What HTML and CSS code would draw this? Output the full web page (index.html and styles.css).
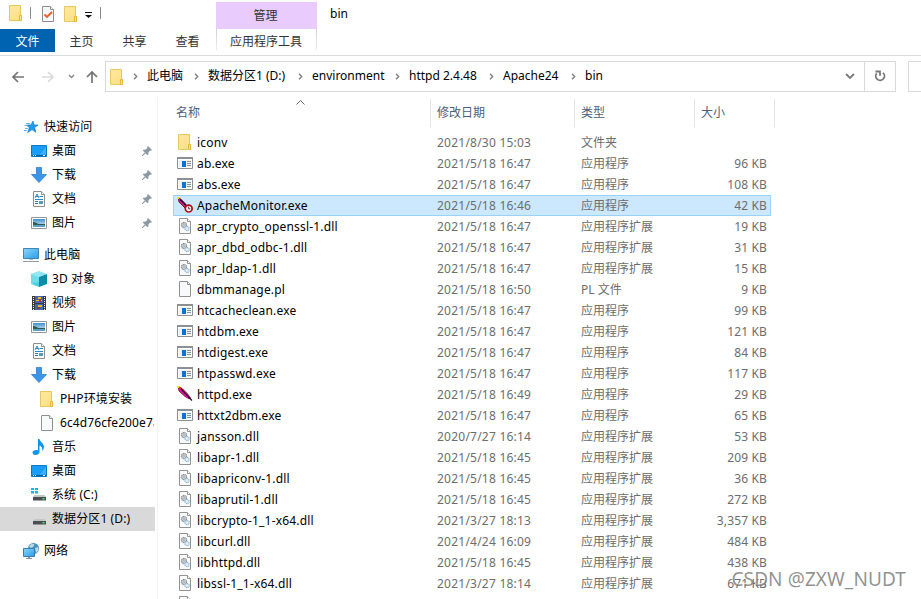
FILE: index.html
```html
<!DOCTYPE html>
<html lang="zh-CN">
<head>
    <meta charset="UTF-8">
    <meta name="viewport" content="width=device-width, initial-scale=1.0">
    <title>bin</title>
    <link rel="stylesheet" href="styles.css">
</head>
<body>
    <svg class="sprites" width="0" height="0">
        <defs>
            <linearGradient id="folder-fill" x1="0" y1="0" x2="1" y2="1">
                <stop offset="0" stop-color="#ffe9a2"/><stop offset="1" stop-color="#ffdf80"/>
            </linearGradient>
            <linearGradient id="screen-fill" x1="0" y1="0" x2="1" y2="1">
                <stop offset="0" stop-color="#8ad6fc"/><stop offset="1" stop-color="#2a9ce6"/>
            </linearGradient>
            <linearGradient id="photo-fill" x1="0" y1="0" x2="0" y2="1">
                <stop offset="0" stop-color="#3d8fd0"/><stop offset="1" stop-color="#eef6fb"/>
            </linearGradient>
        </defs>
        <symbol id="folder" viewBox="0 0 16 16">
            <path d="M1.5 .5h11v10h1v5h-12z" fill="url(#folder-fill)" stroke="#e8c660"/>
            <path d="M11.5 15.5v-5h2v5z" fill="#ffe692" stroke="#e3b83e"/>
        </symbol>
        <symbol id="exe" viewBox="0 0 16 16">
            <path d="M.5 2.5h15v11H.5z" fill="#fff" stroke="#8c9094"/>
            <path d="M0 2h16v2H0z" fill="#8c9094"/>
            <path d="M2 5h12v7H2z" fill="#eef0f2"/>
            <path d="M5 6h4v6H5z" fill="#0a72d8"/>
            <path d="M10 6.5h4M10 8.5h4M10 10.5h4" stroke="#8e9296"/>
        </symbol>
        <symbol id="file" viewBox="0 0 16 16">
            <path d="M2.5 .5h8l3 3v12h-11z" fill="#f8f9fa" stroke="#8f9193"/>
            <path d="M10.5 .5v3h3" fill="#fff" stroke="#8f9193"/>
        </symbol>
        <symbol id="dll" viewBox="0 0 16 16">
            <path d="M2.5 .5h8l3 3v12h-11z" fill="#fafafa" stroke="#939393"/>
            <path d="M10.5 .5v3h3" fill="#fff" stroke="#939393"/>
            <circle cx="7" cy="7" r="2.5" fill="#d9dde0" stroke="#858b91" stroke-width="1.3" stroke-dasharray="1.2 .5"/>
            <circle cx="7" cy="7" r=".9" fill="#fff" stroke="#858b91" stroke-width=".6"/>
            <circle cx="10" cy="10.5" r="2.1" fill="#e1eef7" stroke="#8fb8d4" stroke-width="1.2" stroke-dasharray="1 .5"/>
        </symbol>
        <symbol id="feather" viewBox="0 0 16 16">
            <path d="M1 .5l4 1.8 5.500 5.500L13.500 12l-1 1-4.500-2.500L2 5z" fill="#e01b30" stroke="#8a0d2a" stroke-width=".8"/>
            <path d="M2 2.500l9 9" stroke="#e012c8" stroke-width="1.800"/>
            <path d="M4 3l11 11.500" stroke="#210432" stroke-width="1.100"/>
            <path d="M0 0h2v2H0z" fill="#ffe600"/>
        </symbol>
        <symbol id="monitor" viewBox="0 0 16 16">
            <path d="M1 .5l3 1.800 5 5L8 11 2 5z" fill="#e01b30" stroke="#5d0830" stroke-width=".8"/>
            <path d="M2 2.500l7 7" stroke="#e012c8" stroke-width="1.500"/>
            <path d="M3 2.500l6 6" stroke="#19032a" stroke-width="1.200"/>
            <path d="M0 0h2v2H0z" fill="#ffe600"/>
            <circle cx="11.700" cy="11.600" r="3.400" fill="#fff" stroke="#a80e12" stroke-width="1.700"/>
            <path d="M11.700 9.600v2.200h1.700" fill="none" stroke="#222" stroke-width=".9"/>
        </symbol>
        <symbol id="star" viewBox="0 0 16 16">
            <path d="M10 2l.9 4H15l-3.400 2.600 1.200 4.600L9 10.600l-4.300 2.900 1.700-4.700L3.600 6H8z" fill="#1f9bee" stroke="#1479c4" stroke-width=".7"/>
            <path d="M3 4.500h4M1.500 6.500h3M2 9.500h3M1 11.500h3" stroke="#65b9ee"/>
        </symbol>
        <symbol id="desktop" viewBox="0 0 16 16">
            <path d="M.5 2.500h15v11H.5z" fill="#189df8" stroke="#0c79c6"/>
            <path d="M9 11.500L15 4v7.500z" fill="#3eb1ff"/>
            <path d="M1 12.500h14" stroke="#075f9f"/>
            <path d="M2 12.500h1M4 12.500h1M12 12.500h2" stroke="#fff"/>
        </symbol>
        <symbol id="download" viewBox="0 0 16 16">
            <path d="M5.500 .5h5v7h5L8 15.500.5 7.500h5z" fill="#3a96e8" stroke="#2f7fcb" stroke-width=".8"/>
        </symbol>
        <symbol id="document" viewBox="0 0 16 16">
            <path d="M2.500 .5h8l3 3v12h-11z" fill="#fcfdfd" stroke="#8b9095"/>
            <path d="M10.500 .5v3h3" fill="#fff" stroke="#8b9095"/>
            <path d="M4 7l2-4 2 4M5 5.500h2M8.500 5.500H12M4 8.500h8M4 10.500h3M4 12.500h3" fill="none" stroke="#2787c7"/>
            <path d="M8 10h4v3H8z" fill="#5898bd"/>
        </symbol>
        <symbol id="picture" viewBox="0 0 16 16">
            <path d="M.5 2.500h15v11H.5z" fill="#fff" stroke="#92979b"/>
            <path d="M2 4h12v8H2z" fill="url(#photo-fill)"/>
            <path d="M2 7c3 0 4 2 7 2h5v1H2z" fill="#2f5b50"/>
            <path d="M2 10h12v2H2z" fill="#5e9fc9"/>
        </symbol>
        <symbol id="pc" viewBox="0 0 16 16">
            <path d="M.5 1.500h15v10H.5z" fill="url(#screen-fill)" stroke="#4185b5"/>
            <path d="M6 12h4v1H6z" fill="#a8bccb"/>
            <path d="M0 14.500h16" stroke="#8c9ba6"/>
        </symbol>
        <symbol id="cube" viewBox="0 0 16 16">
            <path d="M0 3l8-3 8 3-8 3z" fill="#8ce8f0"/>
            <path d="M0 3l8 3v10l-8-3z" fill="#4fcfdd"/>
            <path d="M16 3L8 6v10l8-3z" fill="#078da5"/>
            <path d="M0 4l8-3v10l-8 2z" fill="#8fe9f2" opacity=".5"/>
        </symbol>
        <symbol id="video" viewBox="0 0 16 16">
            <path d="M1 1h14v14H1z" fill="#3a3a3a"/>
            <path d="M4 1h8v7H4z" fill="#4567ad"/><path d="M4 9h8v6H4z" fill="#4567ad"/>
            <path d="M7 2h3v2H7zM5 5h6v1H5zM7 10h4v2H7z" fill="#eeb72c"/>
            <path d="M8 4h2v3H8zM6 12h3v2H6z" fill="#8d3f31"/>
            <path d="M2.500 2v13M13.500 2v13" stroke="#eee" stroke-dasharray="1 1"/>
        </symbol>
        <symbol id="music" viewBox="0 0 16 16">
            <path d="M7 0h1.500c.3 3 4.500 4 4.500 8 0 2-1 3.300-1.800 4 .8-3-.7-4.600-2.700-5.400V13c0 2-2 3-4 3s-3-1-3-2.200c0-2 2.800-3.300 5.500-2.400z" fill="#0895ee"/>
        </symbol>
        <symbol id="drive-c" viewBox="0 0 16 16">
            <path d="M0 1h3v2H0zM4 1h3v2H4zM0 4h3v2.500H0zM4 4h3v2.500H4z" fill="#12b5ee"/>
            <path d="M3.500 8h10l1.500 2H2z" fill="#c3c6c8"/>
            <path d="M2 10h13v3.500H2z" fill="#4b4f52"/>
            <path d="M11.500 11h2v1.500h-2z" fill="#3ee45b"/>
        </symbol>
        <symbol id="drive" viewBox="0 0 16 16">
            <path d="M3.500 8h10l1.500 2H2z" fill="#c3c6c8"/>
            <path d="M2 10h13v3.500H2z" fill="#4b4f52"/>
            <path d="M11.500 11h2v1.500h-2z" fill="#3ee45b"/>
        </symbol>
        <symbol id="network" viewBox="0 0 16 16">
            <circle cx="10.500" cy="5.500" r="5.500" fill="#478fb9"/>
            <path d="M6 3.500C8 0 11 1 11.500 2L10 4 8 5zM12 5l3-1c1 3-.5 5-2 6z" fill="#b5dbe8"/>
            <path d="M.5 5.500h11v8H.5z" fill="url(#screen-fill)" stroke="#3c7da9"/>
            <path d="M5 14h2v1h2v1H3v-1h2z" fill="#8496a3"/>
        </symbol>
        <symbol id="pin" viewBox="0 0 10 10">
            <path d="M6 0l4 4-1 .8-.8-.2L6.300 6.500l.2 1.800-.9.9-2-2L.8 10H0v-.8l2.800-2.800-2-2 .9-.9 1.800.2L5.400 1.800 5.200.8z" fill="#8c98a2"/>
        </symbol>
        <symbol id="chevron" viewBox="0 0 5 7">
            <path d="M1 .8L3.700 3.500 1 6.200" fill="none" stroke="#7c7c7c" stroke-width="1.300"/>
        </symbol>
    </svg>

    <div class="titlebar">
        <div class="quick">
            <svg class="icon"><use href="#folder"/></svg>
            <span class="bar"></span>
            <svg class="icon check" viewBox="0 0 16 16">
                <path d="M2.500 .5h8l3 3v12h-11z" fill="#f7f8f9" stroke="#8b8d8f"/>
                <path d="M10.500 .5v3h3" fill="#fff" stroke="#8b8d8f"/>
                <path d="M4.500 8.500l2.500 2.500 5-5" fill="none" stroke="#ed5a24" stroke-width="1.800"/>
            </svg>
            <svg class="icon folder2"><use href="#folder"/></svg>
            <svg class="more" viewBox="0 0 7 6"><path d="M0 0h7v1H0zM0 3h7L3.500 6z" fill="#111"/></svg>
            <span class="bar"></span>
        </div>
        <div class="context-title">管理</div>
        <div class="window-title">bin</div>
    </div>

    <div class="tabs">
        <div class="tab file-tab">文件</div>
        <div class="tab">主页</div>
        <div class="tab">共享</div>
        <div class="tab">查看</div>
        <div class="tab tools-tab">应用程序工具</div>
    </div>

    <div class="navbar">
        <svg class="nav-buttons" viewBox="0 0 105 32">
            <g fill="none" stroke-width="1.700">
                <path d="M24 16H13M18 11l-5 5 5 5" stroke="#747474"/>
                <path d="M42 16h11M48 11l5 5-5 5" stroke="#dadada"/>
                <path d="M69 14l2.500 2.500L74 14" stroke="#8a8a8a" stroke-width="1.500"/>
                <path d="M92 22V11M87 16l5-5 5 5" stroke="#747474"/>
            </g>
        </svg>
        <div class="address">
            <svg class="icon"><use href="#folder"/></svg>
            <div class="crumbs">
                <svg class="sep"><use href="#chevron"/></svg>
                <span class="c1">此电脑</span>
                <svg class="sep"><use href="#chevron"/></svg>
                <span class="c2">数据分区1 (D:)</span>
                <svg class="sep"><use href="#chevron"/></svg>
                <span class="c3">environment</span>
                <svg class="sep"><use href="#chevron"/></svg>
                <span class="c4">httpd 2.4.48</span>
                <svg class="sep"><use href="#chevron"/></svg>
                <span class="c5">Apache24</span>
                <svg class="sep"><use href="#chevron"/></svg>
                <span>bin</span>
            </div>
            <svg class="drop" viewBox="0 0 10 7"><path d="M1 1l4 4 4-4" fill="none" stroke="#7d7d7d" stroke-width="1.900"/></svg>
            <div class="refresh">
                <svg viewBox="0 0 12 12"><path d="M9 2.800a4.300 4.300 0 1 1-6.300.6M1.500 1.500H6v4.300" fill="none" stroke="#777" stroke-width="1.800"/></svg>
            </div>
        </div>
        <div class="search"></div>
    </div>

    <div class="main">
        <div class="sidebar">
            <div class="node root"><svg class="icon"><use href="#star"/></svg><span>快速访问</span></div>
            <div class="node"><svg class="icon"><use href="#desktop"/></svg><span>桌面</span><svg class="pin"><use href="#pin"/></svg></div>
            <div class="node"><svg class="icon"><use href="#download"/></svg><span>下载</span><svg class="pin"><use href="#pin"/></svg></div>
            <div class="node"><svg class="icon"><use href="#document"/></svg><span>文档</span><svg class="pin"><use href="#pin"/></svg></div>
            <div class="node"><svg class="icon"><use href="#picture"/></svg><span>图片</span><svg class="pin"><use href="#pin"/></svg></div>

            <div class="node root group"><svg class="icon"><use href="#pc"/></svg><span>此电脑</span></div>
            <div class="node"><svg class="icon"><use href="#cube"/></svg><span>3D 对象</span></div>
            <div class="node"><svg class="icon"><use href="#video"/></svg><span>视频</span></div>
            <div class="node"><svg class="icon"><use href="#picture"/></svg><span>图片</span></div>
            <div class="node"><svg class="icon"><use href="#document"/></svg><span>文档</span></div>
            <div class="node"><svg class="icon"><use href="#download"/></svg><span>下载</span></div>
            <div class="node child"><svg class="icon"><use href="#folder"/></svg><span>PHP环境安装</span></div>
            <div class="node child"><svg class="icon"><use href="#file"/></svg><span>6c4d76cfe200e7a</span></div>
            <div class="node"><svg class="icon"><use href="#music"/></svg><span>音乐</span></div>
            <div class="node"><svg class="icon"><use href="#desktop"/></svg><span>桌面</span></div>
            <div class="node"><svg class="icon"><use href="#drive-c"/></svg><span>系统 (C:)</span></div>
            <div class="node current"><svg class="icon"><use href="#drive"/></svg><span>数据分区1 (D:)</span></div>

            <div class="node root group"><svg class="icon"><use href="#network"/></svg><span>网络</span></div>
        </div>

        <div class="files">
            <div class="head">
                <div>名称<svg class="sort" viewBox="0 0 9 5"><path d="M.5 4.500l4-4 4 4" fill="none" stroke="#666"/></svg></div>
                <div>修改日期</div>
                <div>类型</div>
                <div>大小</div>
            </div>
            <div class="row"><svg class="icon"><use href="#folder"/></svg><span class="name">iconv</span><span class="date">2021/8/30 15:03</span><span>文件夹</span><span class="size"></span></div>
            <div class="row"><svg class="icon"><use href="#exe"/></svg><span class="name">ab.exe</span><span class="date">2021/5/18 16:47</span><span>应用程序</span><span class="size">96 KB</span></div>
            <div class="row"><svg class="icon"><use href="#exe"/></svg><span class="name">abs.exe</span><span class="date">2021/5/18 16:47</span><span>应用程序</span><span class="size">108 KB</span></div>
            <div class="row selected"><svg class="icon"><use href="#monitor"/></svg><span class="name">ApacheMonitor.exe</span><span class="date">2021/5/18 16:46</span><span>应用程序</span><span class="size">42 KB</span></div>
            <div class="row"><svg class="icon"><use href="#dll"/></svg><span class="name">apr_crypto_openssl-1.dll</span><span class="date">2021/5/18 16:47</span><span>应用程序扩展</span><span class="size">19 KB</span></div>
            <div class="row"><svg class="icon"><use href="#dll"/></svg><span class="name">apr_dbd_odbc-1.dll</span><span class="date">2021/5/18 16:47</span><span>应用程序扩展</span><span class="size">31 KB</span></div>
            <div class="row"><svg class="icon"><use href="#dll"/></svg><span class="name">apr_ldap-1.dll</span><span class="date">2021/5/18 16:47</span><span>应用程序扩展</span><span class="size">15 KB</span></div>
            <div class="row"><svg class="icon"><use href="#file"/></svg><span class="name">dbmmanage.pl</span><span class="date">2021/5/18 16:50</span><span>PL 文件</span><span class="size">9 KB</span></div>
            <div class="row"><svg class="icon"><use href="#exe"/></svg><span class="name">htcacheclean.exe</span><span class="date">2021/5/18 16:47</span><span>应用程序</span><span class="size">99 KB</span></div>
            <div class="row"><svg class="icon"><use href="#exe"/></svg><span class="name">htdbm.exe</span><span class="date">2021/5/18 16:47</span><span>应用程序</span><span class="size">121 KB</span></div>
            <div class="row"><svg class="icon"><use href="#exe"/></svg><span class="name">htdigest.exe</span><span class="date">2021/5/18 16:47</span><span>应用程序</span><span class="size">84 KB</span></div>
            <div class="row"><svg class="icon"><use href="#exe"/></svg><span class="name">htpasswd.exe</span><span class="date">2021/5/18 16:47</span><span>应用程序</span><span class="size">117 KB</span></div>
            <div class="row"><svg class="icon"><use href="#feather"/></svg><span class="name">httpd.exe</span><span class="date">2021/5/18 16:49</span><span>应用程序</span><span class="size">29 KB</span></div>
            <div class="row"><svg class="icon"><use href="#exe"/></svg><span class="name">httxt2dbm.exe</span><span class="date">2021/5/18 16:47</span><span>应用程序</span><span class="size">65 KB</span></div>
            <div class="row"><svg class="icon"><use href="#dll"/></svg><span class="name">jansson.dll</span><span class="date">2020/7/27 16:14</span><span>应用程序扩展</span><span class="size">53 KB</span></div>
            <div class="row"><svg class="icon"><use href="#dll"/></svg><span class="name">libapr-1.dll</span><span class="date">2021/5/18 16:45</span><span>应用程序扩展</span><span class="size">209 KB</span></div>
            <div class="row"><svg class="icon"><use href="#dll"/></svg><span class="name">libapriconv-1.dll</span><span class="date">2021/5/18 16:45</span><span>应用程序扩展</span><span class="size">36 KB</span></div>
            <div class="row"><svg class="icon"><use href="#dll"/></svg><span class="name">libaprutil-1.dll</span><span class="date">2021/5/18 16:45</span><span>应用程序扩展</span><span class="size">272 KB</span></div>
            <div class="row"><svg class="icon"><use href="#dll"/></svg><span class="name">libcrypto-1_1-x64.dll</span><span class="date">2021/3/27 18:13</span><span>应用程序扩展</span><span class="size">3,357 KB</span></div>
            <div class="row"><svg class="icon"><use href="#dll"/></svg><span class="name">libcurl.dll</span><span class="date">2021/4/24 16:09</span><span>应用程序扩展</span><span class="size">484 KB</span></div>
            <div class="row"><svg class="icon"><use href="#dll"/></svg><span class="name">libhttpd.dll</span><span class="date">2021/5/18 16:45</span><span>应用程序扩展</span><span class="size">438 KB</span></div>
            <div class="row"><svg class="icon"><use href="#dll"/></svg><span class="name">libssl-1_1-x64.dll</span><span class="date">2021/3/27 18:14</span><span>应用程序扩展</span><span class="size">671 KB</span></div>
            <div class="row"><svg class="icon"><use href="#dll"/></svg></div>
        </div>
    </div>

    <div class="watermark">CSDN @ZXW_NUDT</div>
</body>
</html>
```
FILE: styles.css
```css
* {
    margin: 0;
    padding: 0;
    box-sizing: border-box;
}
body {
    width: 921px;
    height: 599px;
    overflow: hidden;
    display: flex;
    flex-direction: column;
    position: relative;
    background-color: #fff;
    color: #000;
    font-family: "Noto Sans", "Noto Sans CJK SC", sans-serif;
    font-size: 12px;
    line-height: 20px;
    white-space: nowrap;
}
svg {
    flex: none;
}
.sprites {
    position: absolute;
}
.icon {
    width: 16px;
    height: 16px;
}

/* title bar */
.titlebar {
    display: flex;
    height: 29px;
    flex: none;
}
.quick {
    display: flex;
    align-items: flex-start;
    width: 216px;
    padding: 5px 0 0 8px;
}
.quick .bar {
    width: 1px;
    height: 12px;
    margin: 2px 0 0 6px;
    background-color: #8a8a8a;
}
.quick .check {
    margin: 1px 0 0 9px;
}
.quick .folder2 {
    margin: 1px 0 0 7px;
}
.quick .more {
    width: 7px;
    height: 6px;
    margin: 7px 2px 0 6px;
}
.context-title {
    width: 101px;
    margin-top: 2px;
    padding-right: 2px;
    line-height: 27px;
    text-align: center;
    background-color: #e9cbfd;
    color: #333;
}
.window-title {
    margin-left: 13px;
    line-height: 28px;
}

/* ribbon tabs */
.tabs {
    display: flex;
    flex: none;
    height: 27px;
    border-bottom: 1px solid #dadbdc;
    color: #333;
}
.tab {
    width: 53px;
    height: 23px;
    line-height: 26px;
    text-align: center;
}
.file-tab {
    width: 55px;
    line-height: 25px;
    background-color: #0063b1;
    color: #fff;
}
.tools-tab {
    width: 101px;
    margin-left: 2px;
    padding-right: 1px;
    height: 21px;
    border: solid;
    border-width: 0 1px;
    border-image: linear-gradient(#d0d0d0, #eee) 1;
}

/* address bar */
.navbar {
    display: flex;
    flex: none;
    height: 42px;
    padding-top: 5px;
}
.nav-buttons {
    width: 105px;
    height: 32px;
}
.address {
    display: flex;
    align-items: center;
    width: 791px;
    height: 31px;
    padding-left: 3px;
    border: 1px solid #d9d9d9;
}
.crumbs {
    display: flex;
    align-items: center;
    flex: 1;
    padding-left: 8px;
}
.sep {
    width: 5px;
    height: 7px;
    margin: 0 9px 0 0;
}
.crumbs span {
    line-height: 28px;
    margin-top: -2px;
}
.c1 { width: 47px; }
.c2 { width: 90px; }
.c3 { width: 83px; }
.c4 { width: 80px; }
.c5 { width: 68px; }
.drop {
    width: 10px;
    height: 7px;
    margin-right: 9px;
}
.refresh {
    display: flex;
    align-items: center;
    justify-content: center;
    width: 31px;
    height: 29px;
    border-left: 1px solid #d9d9d9;
}
.refresh svg {
    width: 12px;
    height: 12px;
    margin-bottom: 1px;
}
.search {
    width: 13px;
    height: 31px;
    margin-left: 12px;
    border: 1px solid #d9d9d9;
    border-right: 0;
}

/* panes */
.main {
    display: flex;
    flex: 1;
    min-height: 0;
}
.sidebar {
    width: 158px;
    padding: 17px 2px 0 0;
    border-right: 1px solid #f3f3f3;
}
.node {
    display: flex;
    align-items: center;
    height: 24px;
    padding-left: 31px;
    overflow: hidden;
}
.node span {
    flex: 1;
    min-width: 0;
    overflow: hidden;
    margin-left: 5px;
    line-height: 24px;
    letter-spacing: .1px;
}
.node.root {
    padding-left: 23px;
}
.node.child {
    padding: 0 1px 0 39px;
}
.node.group {
    margin-top: 8px;
}
.node.current {
    background-color: #d9d9d9;
}
.pin {
    width: 10px;
    height: 10px;
    margin-right: 3px;
}

/* file list */
.files {
    flex: 1;
    overflow: hidden;
    padding-left: 15px;
    color: #6d6d6d;
}
.head {
    display: grid;
    grid-template-columns: 258px 144px 120px 80px;
    height: 28px;
    margin: 1px 0 5px;
    color: #4c607a;
    line-height: 27px;
}
.head div {
    position: relative;
    padding-left: 6px;
    border-right: 1px solid #e5e5e5;
}
.head div:first-child {
    padding-left: 3px;
}
.sort {
    position: absolute;
    top: 1px;
    left: 123px;
    width: 9px;
    height: 5px;
}
.row {
    display: grid;
    grid-template-columns: 16px 244px 144px 120px 66px;
    width: 598px;
    height: 21px;
    padding-left: 4px;
    line-height: 21px;
}
.row .icon {
    margin-top: 2px;
}
.row .name {
    padding-left: 4px;
    color: #000;
    letter-spacing: .18px;
}
.row .date {
    letter-spacing: .23px;
}
.row .size {
    text-align: right;
    letter-spacing: .15px;
}
.row.selected {
    background-color: #cce8ff;
    box-shadow: inset 0 0 0 1px #99d1ff;
}

.watermark {
    position: absolute;
    right: 15px;
    bottom: 7px;
    font-size: 19px;
    line-height: 26px;
    letter-spacing: .1px;
    color: rgba(110, 110, 110, .75);
    text-shadow: -1px -1px 0 rgba(255, 255, 255, .8);
}
```
